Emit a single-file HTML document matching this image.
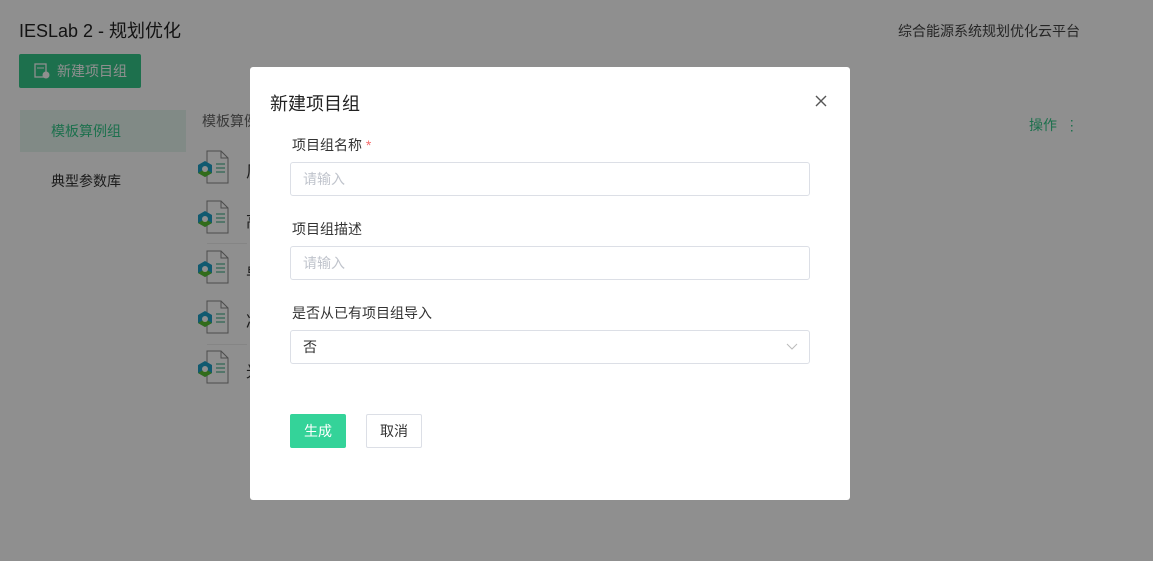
<!DOCTYPE html>
<html><head><meta charset="utf-8"><style>
*{box-sizing:border-box;margin:0;padding:0}
body{width:1153px;height:561px;overflow:hidden;background:#fff;font-family:"Liberation Sans","Noto Sans CJK SC",sans-serif;position:relative;color:#333}
.abs{position:absolute}
.mask{position:absolute;left:0;top:0;width:1153px;height:561px;background:rgba(0,0,0,0.44)}
.icon{position:absolute;width:34px;height:36px}
.it{position:absolute;left:246px;font-size:16px;color:#333}
.modal{position:absolute;left:250px;top:67px;width:600px;height:433px;background:#fff;border-radius:3px}
.lbl{position:absolute;left:42px;font-size:14px;color:#333}
.inp{position:absolute;left:40px;width:520px;height:34px;border:1px solid #dcdfe6;border-radius:3px;font-size:14px;padding-left:12px;line-height:32px;color:#c0c4cc}
</style></head><body>
<div class="abs" style="left:19px;top:17px;font-size:18px;color:#222">IESLab 2 - 规划优化</div>
<div class="abs" style="left:898px;top:21px;font-size:14px;color:#444">综合能源系统规划优化云平台</div>
<div class="abs" style="left:19px;top:54px;width:122px;height:34px;background:#34c88a;border-radius:2px;color:#fff;font-size:14px;line-height:34px;padding-left:38px">新建项目组</div>
<svg class="abs" style="left:34px;top:63px" width="16" height="16" viewBox="0 0 16 16"><rect x="1" y="1" width="11" height="13" fill="none" stroke="#fff" stroke-width="1.3"/><line x1="3" y1="5" x2="10" y2="5" stroke="#fff"/><circle cx="12" cy="12" r="3.5" fill="#fff"/></svg>
<div class="abs" style="left:20px;top:110px;width:166px;height:42px;background:#e6f7ef;color:#34c88a;font-size:14px;line-height:42px;padding-left:31px">模板算例组</div>
<div class="abs" style="left:51px;top:171px;font-size:14px;color:#333">典型参数库</div>
<div class="abs" style="left:202px;top:111px;font-size:14px;color:#666">模板算例</div>
<div class="abs" style="left:1029px;top:115px;font-size:14px;color:#34c88a">操作 &nbsp;⋮</div>
<div class="abs" style="left:207px;top:243px;width:40px;height:1px;background:#eee"></div>
<div class="abs" style="left:207px;top:344px;width:40px;height:1px;background:#eee"></div>
<svg width="0" height="0"><defs><g id="doc"><path d="M11 1h14l7 7v25H11z" fill="#fff" stroke="#888"/><path d="M25 1v7h7" fill="none" stroke="#888"/><line x1="20" y1="14" x2="29" y2="14" stroke="#2aa57a"/><line x1="20" y1="18" x2="29" y2="18" stroke="#2aa57a"/><line x1="20" y1="22" x2="29" y2="22" stroke="#2aa57a"/><polygon points="9,11 16,15 16,23 9,27 2,23 2,15" fill="#1fa0c8"/><polygon points="9,19 16,23 9,27 2,23" fill="#58c030"/><circle cx="9" cy="19" r="3" fill="#fff"/></g></defs></svg>
<svg class="icon" style="left:196px;top:150px"><use href="#doc"/></svg>
<svg class="icon" style="left:196px;top:200px"><use href="#doc"/></svg>
<svg class="icon" style="left:196px;top:250px"><use href="#doc"/></svg>
<svg class="icon" style="left:196px;top:300px"><use href="#doc"/></svg>
<svg class="icon" style="left:196px;top:350px"><use href="#doc"/></svg>
<div class="it" style="top:158px">风</div>
<div class="it" style="top:208px">高</div>
<div class="it" style="top:258px">单</div>
<div class="it" style="top:308px">冷</div>
<div class="it" style="top:358px">光</div>
<div class="mask"></div>
<div class="modal">
<div class="abs" style="left:20px;top:23px;font-size:18px;color:#222">新建项目组</div>
<svg class="abs" style="left:565px;top:28px" width="12" height="12"><path d="M1 1L11 11M11 1L1 11" stroke="#555" stroke-width="1.4"/></svg>
<div class="lbl" style="top:68px">项目组名称 <span style="color:#f56c6c">*</span></div>
<div class="inp" style="top:95px">请输入</div>
<div class="lbl" style="top:152px">项目组描述</div>
<div class="inp" style="top:179px">请输入</div>
<div class="lbl" style="top:236px">是否从已有项目组导入</div>
<div class="inp" style="top:263px;color:#333">否</div>
<svg class="abs" style="left:536px;top:276px" width="12" height="8"><path d="M1 1l5 5 5-5" fill="none" stroke="#bbb"/></svg>
<div class="abs" style="left:40px;top:347px;width:56px;height:34px;background:#34d399;border-radius:2px;color:#fff;font-size:14px;line-height:34px;text-align:center">生成</div>
<div class="abs" style="left:116px;top:347px;width:56px;height:34px;border:1px solid #dcdfe6;border-radius:2px;color:#333;font-size:14px;line-height:32px;text-align:center">取消</div>
</div>
</body></html>
